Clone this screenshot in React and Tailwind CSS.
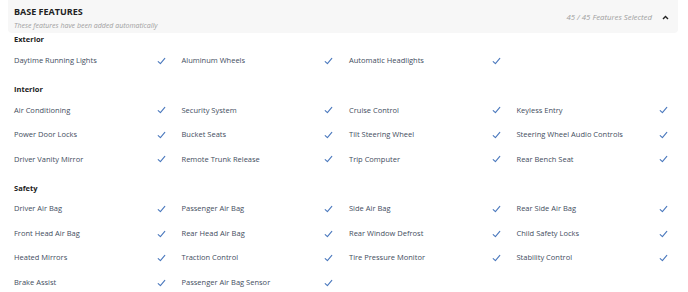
import React from "react";

const sections = [
  { title: "Exterior", items: ["Daytime Running Lights", "Aluminum Wheels", "Automatic Headlights"] },
  {
    title: "Interior",
    items: [
      "Air Conditioning", "Security System", "Cruise Control", "Keyless Entry",
      "Power Door Locks", "Bucket Seats", "Tilt Steering Wheel", "Steering Wheel Audio Controls",
      "Driver Vanity Mirror", "Remote Trunk Release", "Trip Computer", "Rear Bench Seat",
    ],
  },
  {
    title: "Safety",
    items: [
      "Driver Air Bag", "Passenger Air Bag", "Side Air Bag", "Rear Side Air Bag",
      "Front Head Air Bag", "Rear Head Air Bag", "Rear Window Defrost", "Child Safety Locks",
      "Heated Mirrors", "Traction Control", "Tire Pressure Monitor", "Stability Control",
      "Brake Assist", "Passenger Air Bag Sensor",
    ],
  },
];

function Check() {
  return (
    <svg width="9" height="8" viewBox="0 0 9 8" fill="none">
      <path d="M1.2 4.6 L3.4 6.6 L7.8 1.4" stroke="#4a78bd" strokeWidth="1.1" strokeLinecap="round" strokeLinejoin="round" />
    </svg>
  );
}

export default function App() {
  return (
    <div className="w-[688px] h-[292px] bg-white overflow-hidden" style={{ fontFamily: '"Open Sans", "Noto Sans", sans-serif' }}>
      <div className="mx-2 w-[670px]">
        <div className="h-[33px] bg-[#f7f7f7] rounded-b-[4px] flex items-start pl-[6px] pr-[9px]">
          <div className="flex flex-col flex-1 pt-[6px]">
            <div className="text-[9px] leading-[12px] font-bold text-[#222]">BASE FEATURES</div>
            <div className="text-[7px] leading-[12px] mt-[1.5px] italic text-[#a0a0a0]">These features have been added automatically</div>
          </div>
          <div className="h-[35px] flex items-center gap-[10px]">
            <div className="text-[7.8px] italic text-[#a0a0a0]">45 / 45 Features Selected</div>
            <svg width="7" height="5" viewBox="0 0 7 5">
              <path d="M1 4 L3.5 1.5 L6 4" stroke="#222" strokeWidth="1.4" fill="none" />
            </svg>
          </div>
        </div>
        <div className="flex flex-col gap-[10px]">
          {sections.map((s) => (
            <div key={s.title}>
              <div className="h-[12px] leading-[12px] text-[7.5px] font-bold text-[#222] pl-[6px]">{s.title}</div>
              <div className="grid grid-cols-4 mt-[3.25px]">
                {s.items.map((it) => (
                  <div key={it} className="h-[24.5px] flex items-center justify-between pl-[6px] pr-[10px]">
                    <span className="text-[7.5px] text-[#434d5e]">{it}</span>
                    <Check />
                  </div>
                ))}
              </div>
            </div>
          ))}
        </div>
      </div>
    </div>
  );
}
